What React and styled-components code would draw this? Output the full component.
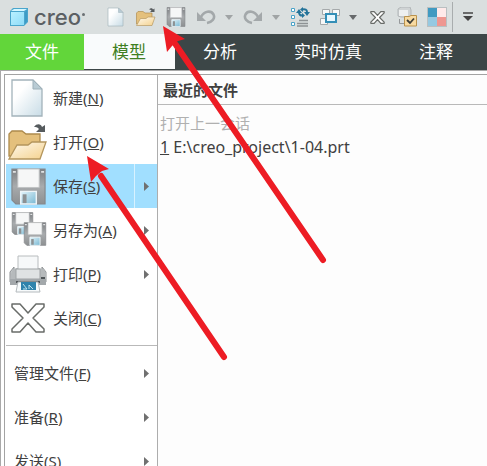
import React from "react";
import styled, { createGlobalStyle } from "styled-components";

const Global = createGlobalStyle`
  * { box-sizing: border-box; }
  html { scrollbar-width: none; }
  body { margin: 0; background: #fdfdfd; }
  button { border: 0; margin: 0; padding: 0; background: none; font: inherit; color: inherit; cursor: pointer; }
  svg { display: block; flex: none; }
`;

const Window = styled.div`
  position: relative;
  display: flex;
  flex-direction: column;
  min-height: 100vh;
  font-family: "Noto Sans", "Noto Sans CJK SC", sans-serif;
  font-size: 15px;
  color: #404040;
`;

const Toolbar = styled.header`
  display: flex;
  flex: none;
  align-items: center;
  height: 34px;
  overflow: hidden;
  background: #dadfdf;
`;

const Brand = styled.div`
  display: flex;
  flex: none;
  align-items: center;
  gap: 5px;
  width: 101px;
  height: 34px;
  padding-left: 9px;
`;

const BrandName = styled.span`
  display: flex;
  align-items: center;
  font: 500 22px/34px Inter, sans-serif;
  color: #5b6063;
`;

const Mark = styled.span`
  width: 3px;
  height: 3px;
  align-self: flex-start;
  margin: 13px 0 0 1px;
  border-radius: 50%;
  background: #6b7073;
`;

const ToolButton = styled.button`
  display: flex;
  flex: none;
  align-items: center;
  justify-content: center;
  width: 30px;
  height: 34px;
`;

const CaretButton = styled(ToolButton)`
  width: 16px;
  margin-right: 1px;
  color: ${(p) => (p.$muted ? "#a0a4a5" : "#66696b")};
`;

const Divider = styled.span`
  flex: none;
  width: 1px;
  height: 30px;
  background: #a9adae;
`;

const Tabs = styled.nav`
  display: flex;
  flex: none;
  height: 36px;
  overflow: hidden;
  background: #3c4647;
`;

const Tab = styled.button`
  flex: none;
  height: ${(p) => (p.$active ? 35 : 36)}px;
  padding: 0 29px 0 28px;
  font-size: 17px;
  line-height: 36px;
  white-space: nowrap;
  color: ${(p) => (p.$active ? "#3f7f22" : "#fff")};
  background: ${(p) => (p.$active ? "#f9fbfc" : "transparent")};
`;

const FileTab = styled(Tab)`
  padding: 0 25px;
  background: #62d63a;
`;

const Frame = styled.div`
  display: flex;
  flex: 1;
  padding: 3px 0 0 3px;
  border-top: 1px solid #a9a9a9;
  border-left: 1px solid #a9a9a9;
  background: #fff;
`;

const Panel = styled.main`
  display: flex;
  flex: 1;
  min-width: 0;
  border-top: 1px solid #a3a3a3;
  border-left: 1px solid #a3a3a3;
`;

const Menu = styled.div`
  flex: none;
  width: 153px;
  padding: 1px 0 0 1px;
  border-right: 1px solid #adadad;
`;

const MenuRow = styled.div`
  display: flex;
  height: 44px;
  background: ${(p) => (p.$selected ? "#a1dfff" : "transparent")};
`;

const MenuButton = styled.button`
  display: flex;
  flex: 1;
  align-items: center;
  gap: 5px;
  padding-left: ${(p) => (p.$plain ? 8 : 2)}px;
  white-space: nowrap;
`;

const MenuLabel = styled.span`
  padding-bottom: 2px;
`;

const IconSlot = styled.span`
  display: flex;
  align-items: center;
  justify-content: center;
  width: 40px;
`;

const SubmenuButton = styled.button`
  display: flex;
  align-items: center;
  justify-content: center;
  width: 23px;
  border-left: 1px solid ${(p) => (p.$selected ? "#d8f2ff" : "transparent")};
`;

const Rule = styled.hr`
  height: 1px;
  margin: 5px 0;
  border: 0;
  background: #b9b9b9;
`;

const Recent = styled.section`
  flex: 1;
  min-width: 0;
  background: #fdfdfd;
`;

const RecentTitle = styled.h2`
  margin: 0;
  height: 30px;
  padding-left: 5px;
  border-bottom: 1px solid #b9b9b9;
  font-size: 15px;
  line-height: 30px;
`;

const RecentList = styled.div`
  display: flex;
  flex-direction: column;
  align-items: flex-start;
  padding: 6px 2px;
`;

const RecentButton = styled.button`
  height: 24px;
  line-height: 24px;
  white-space: nowrap;
  font-size: ${(p) => (p.disabled ? 15 : 16)}px;
  color: ${(p) => (p.disabled ? "#b0b0b0" : "#404040")};
`;

const Pointers = styled.svg`
  position: absolute;
  top: 0;
  left: 0;
  pointer-events: none;
`;

const Defs = styled.svg`
  position: absolute;
`;

const Gradients = () => (
  <Defs width="0" height="0" aria-hidden="true">
    <defs>
      <linearGradient id="paper" x1="0" y1="0" x2="1" y2="1">
        <stop offset="0.3" stopColor="#fff" /><stop offset="1" stopColor="#c8dce6" />
      </linearGradient>
      <linearGradient id="flap" x1="0" y1="0" x2="1" y2="1">
        <stop offset="0" stopColor="#fffaf0" /><stop offset="1" stopColor="#f4d18c" />
      </linearGradient>
      <linearGradient id="metal" x1="0" y1="0" x2="0" y2="1">
        <stop offset="0" stopColor="#7d8083" /><stop offset="0.5" stopColor="#a8abad" /><stop offset="1" stopColor="#8d9092" />
      </linearGradient>
      <linearGradient id="glass" x1="0" y1="0" x2="1" y2="1">
        <stop offset="0" stopColor="#e4f5fb" /><stop offset="1" stopColor="#77b7d2" />
      </linearGradient>
      <linearGradient id="cube" x1="0" y1="0" x2="1" y2="1">
        <stop offset="0" stopColor="#b9f0ff" /><stop offset="1" stopColor="#8edcf8" />
      </linearGradient>
    </defs>
  </Defs>
);

const Cube = () => (
  <svg width="20" height="20" viewBox="0 0 20 20">
    <path d="M1 4 4 1H19V15L15 19H1Z" fill="#4aa5cc" />
    <path d="M2 4 5 2H18L15 4Z" fill="#d5f7ff" />
    <path d="M16 5 18 3V14L16 17Z" fill="#3c9cc6" />
    <path d="M2 5H15V18H2Z" fill="url(#cube)" />
  </svg>
);

const PageIcon = ({ size = 20 }) => (
  <svg width={size} height={size} viewBox="0 0 40 40">
    <path d="M4 2H25L34 11V38H4Z" fill="url(#paper)" stroke="#a3b3bb" strokeWidth="1.3" />
    <path d="M25 2V11H34Z" fill="#b8cbd4" stroke="#9eb0b9" />
  </svg>
);

const FolderIcon = ({ size = 20 }) => (
  <svg width={size} height={size} viewBox="0 0 40 40">
    <path d="M1 34V12L4 9H14L18 12H32V34Z" fill="#e4c07c" stroke="#ad8a4c" strokeWidth="1.3" />
    <path d="M1 37 9 23H20L24 20H38L32 37Z" fill="url(#flap)" stroke="#b4955c" strokeWidth="1.3" />
    <path d="M26 5C29 1 33 2 34 5L37 3V10H28L31 7C29 5 28 5 26 5Z" fill="#565b5e" />
  </svg>
);

const Floppy = ({ size = 20 }) => (
  <svg width={size} height={size} viewBox="0 0 36 38">
    <path d="M1 1H35V37H5L1 33Z" fill="url(#metal)" stroke="#85888b" strokeWidth="1.2" />
    <path d="M7 1H29V20H7Z" fill="#f6f7f7" stroke="#c0c2c3" />
    <path d="M2 4H5M31 4H34" stroke="#e1e3e4" strokeWidth="2" />
    <path d="M10 24H26V37H10Z" fill="url(#glass)" stroke="#edf4f7" strokeWidth="1.5" />
    <path d="M12 27H16V36H12Z" fill="#8d9193" />
  </svg>
);

const SaveAsIcon = () => (
  <svg width="37" height="36" viewBox="0 0 37 36">
    <svg width="23" height="25" x="1" y="0"><Floppy size={23} /></svg>
    <svg width="24" height="25" x="13" y="10"><Floppy size={24} /></svg>
  </svg>
);

const PrinterIcon = () => (
  <svg width="38" height="38" viewBox="0 0 38 38">
    <path d="M1 17 5 12V27H1ZM37 17 33 12V27H37Z" fill="#c6c9cb" stroke="#8f9395" />
    <path d="M2 19Q3 13 8 13H30Q36 13 37 19V30H1Z" fill="#b6babc" />
    <path d="M9 1H29V15H9Z" fill="#f6f8f9" stroke="#b8bcbe" />
    <path d="M7 14H31V24H7Z" fill="#dfe2e3" stroke="#9fa3a5" />
    <path d="M1 24H37V30H1Z" fill="#a3a8ab" />
    <path d="M7 26H31V28H7Z" fill="#54595c" />
    <path d="M9 27H29L31 37H7Z" fill="#f7fafb" stroke="#b4babd" />
    <path d="M12 27H27V35H12Z" fill="#2f83ac" />
    <path d="M14 29 18 34H14M20 34V30L24 34" fill="none" stroke="#bfe2ee" />
    <path d="M32 23H36" stroke="#4f5558" strokeWidth="2" />
  </svg>
);

const CrossIcon = ({ size = 36, weight = 1.5 }) => (
  <svg width={size} height={size} viewBox="0 0 36 36">
    <path d="M2 4H10L18 13 26 4H34V7L23 18 34 29V32H26L18 23 10 32H2V29L13 18 2 7Z"
      fill="#fff" stroke="#696c69" strokeWidth={weight} strokeLinejoin="round" />
  </svg>
);

const UndoIcon = () => (
  <svg width="20" height="16" viewBox="0 0 20 16">
    <path d="M5 8C8 2 15 1 17.5 5.500C19.500 9.500 16 13 11 14" fill="none" stroke="#a3a8aa" strokeWidth="2.600" />
    <path d="M1 3V12H10Z" fill="#a3a8aa" />
  </svg>
);

const RedoIcon = () => (
  <svg width="20" height="16" viewBox="0 0 20 16">
    <path d="M15 8C12 2 5 1 2.500 5.500C.5 9.500 4 13 9 14" fill="none" stroke="#a3a8aa" strokeWidth="2.600" />
    <path d="M19 3V12H10Z" fill="#a3a8aa" />
  </svg>
);

const RegenIcon = () => (
  <svg width="20" height="20" viewBox="0 0 20 20">
    <path d="M1.500 1.500H4.500V4.500H1.500ZM1.500 8.500H4.500V11.500H1.500ZM1.500 15.500H4.500V18.500H1.500Z" fill="#fff" stroke="#4aa3c8" />
    <path d="M9 13.500H18M7 16.500H18M7 19H18" stroke="#8d9294" strokeWidth="1.500" />
    <path d="M12 2.500Q17 1.500 17 5" fill="none" stroke="#247399" strokeWidth="2" />
    <path d="M14 5H20L17 9ZM13 0V5L10 2.500Z" fill="#247399" />
    <path d="M9 5Q9 9 13 8.500" fill="none" stroke="#247399" strokeWidth="2" />
    <path d="M6 6 9 2 12 6ZM12 6V11L15 8.500Z" fill="#247399" />
  </svg>
);

const WindowsIcon = () => (
  <svg width="22" height="20" viewBox="0 0 22 20">
    <g fill="#f7f8f8" stroke="#a5a9ab"><path d="M3.500 2.500H10.500V7.500H3.500ZM13.500 2.500H20.500V8.500H13.500ZM1.500 11.500H8.500V17.500H1.500Z" /></g>
    <path d="M7 7H17V15H7Z" fill="#e8f8ff" stroke="#348fb7" strokeWidth="2" />
  </svg>
);

const SelectIcon = () => (
  <svg width="21" height="20" viewBox="0 0 21 20">
    <path d="M1 2 4 0H13L14 3V10H4L1 9Z" fill="#cfd3d4" stroke="#b2b6b8" />
    <path d="M2 3H11V9H2Z" fill="#eef0f0" />
    <path d="M2.500 12V16.500H7" fill="none" stroke="#96999b" />
    <path d="M7.500 9.500V19H19.500V8.500H14L12 9.500Z" fill="#f8daa0" stroke="#b9924d" />
    <path d="M10 13 13 16 17 11.500" fill="none" stroke="#3e3e38" strokeWidth="1.800" />
  </svg>
);

const SwatchIcon = () => (
  <svg width="20" height="20" viewBox="0 0 20 20">
    <path d="M0 0H20V20H0Z" fill="#b9bfc1" />
    <path d="M1 1H10V10H1Z" fill="#409ac1" />
    <path d="M10 1H19V10H10Z" fill="#ffeaea" />
    <path d="M1 10H10V19H1Z" fill="#95c9e1" />
    <path d="M10 10H19V19H10Z" fill="#ee9791" />
  </svg>
);

const Caret = () => (
  <svg width="8" height="5" viewBox="0 0 8 5"><path d="M0 0H8L4 5Z" fill="currentColor" /></svg>
);

const Overflow = () => (
  <svg width="12" height="10" viewBox="0 0 12 10">
    <path d="M1 1H11" stroke="#444" strokeWidth="1.500" /><path d="M1 4H11L6 9Z" fill="#444" />
  </svg>
);

const SubArrow = () => (
  <svg width="5" height="9" viewBox="0 0 5 9"><path d="M0 0 5 4.500 0 9Z" fill="#707070" /></svg>
);

const mainItems = [
  { label: "新建", hotkey: "N", icon: <PageIcon size={40} /> },
  { label: "打开", hotkey: "O", icon: <FolderIcon size={40} /> },
  { label: "保存", hotkey: "S", icon: <Floppy size={37} />, sub: true, selected: true },
  { label: "另存为", hotkey: "A", icon: <SaveAsIcon />, sub: true },
  { label: "打印", hotkey: "P", icon: <PrinterIcon />, sub: true },
  { label: "关闭", hotkey: "C", icon: <CrossIcon /> },
];

const moreItems = [
  { label: "管理文件", hotkey: "F", sub: true },
  { label: "准备", hotkey: "R", sub: true },
  { label: "发送", hotkey: "S", sub: true },
];

const MenuItem = ({ item }) => (
  <MenuRow $selected={item.selected}>
    <MenuButton $plain={!item.icon}>
      {item.icon && <IconSlot>{item.icon}</IconSlot>}
      <MenuLabel>{item.label}(<u>{item.hotkey}</u>)</MenuLabel>
    </MenuButton>
    {item.sub && (
      <SubmenuButton $selected={item.selected} aria-label={`${item.label} 子菜单`}><SubArrow /></SubmenuButton>
    )}
  </MenuRow>
);

export default function App() {
  return (
    <Window>
      <Global />
      <Gradients />
      <Toolbar>
        <Brand><Cube /><BrandName>creo<Mark /></BrandName></Brand>
        <ToolButton aria-label="新建"><PageIcon /></ToolButton>
        <ToolButton aria-label="打开"><FolderIcon /></ToolButton>
        <ToolButton aria-label="保存"><Floppy /></ToolButton>
        <ToolButton aria-label="撤消"><UndoIcon /></ToolButton>
        <CaretButton $muted aria-label="撤消列表"><Caret /></CaretButton>
        <ToolButton aria-label="重做"><RedoIcon /></ToolButton>
        <CaretButton $muted aria-label="重做列表"><Caret /></CaretButton>
        <ToolButton aria-label="重新生成"><RegenIcon /></ToolButton>
        <ToolButton aria-label="窗口"><WindowsIcon /></ToolButton>
        <CaretButton aria-label="窗口列表"><Caret /></CaretButton>
        <ToolButton aria-label="关闭"><CrossIcon size={15} weight={3} /></ToolButton>
        <ToolButton aria-label="选择"><SelectIcon /></ToolButton>
        <ToolButton aria-label="外观"><SwatchIcon /></ToolButton>
        <Divider />
        <ToolButton aria-label="自定义"><Overflow /></ToolButton>
      </Toolbar>
      <Tabs>
        <FileTab>文件</FileTab>
        <Tab $active>模型</Tab>
        <Tab>分析</Tab>
        <Tab>实时仿真</Tab>
        <Tab>注释</Tab>
      </Tabs>
      <Frame>
        <Panel>
          <Menu>
            {mainItems.map((item) => <MenuItem key={item.label} item={item} />)}
            <Rule />
            {moreItems.map((item) => <MenuItem key={item.label} item={item} />)}
          </Menu>
          <Recent>
            <RecentTitle>最近的文件</RecentTitle>
            <RecentList>
              <RecentButton disabled>打开上一会话</RecentButton>
              <RecentButton><u>1</u> E:\creo_project\1-04.prt</RecentButton>
            </RecentList>
          </Recent>
        </Panel>
      </Frame>
      <Pointers width="330" height="366" viewBox="0 0 330 366" fill="#ed1c24" stroke="#ed1c24" aria-hidden="true">
        <path d="M176 45 323 260M101 176 224 357" strokeWidth="6" strokeLinecap="round" />
        <path d="M163 26 185 39 178 41 172 46 167 52Z" stroke="none" />
        <path d="M87 156 109 169 102 171 96 176 91 182Z" stroke="none" />
      </Pointers>
    </Window>
  );
}
